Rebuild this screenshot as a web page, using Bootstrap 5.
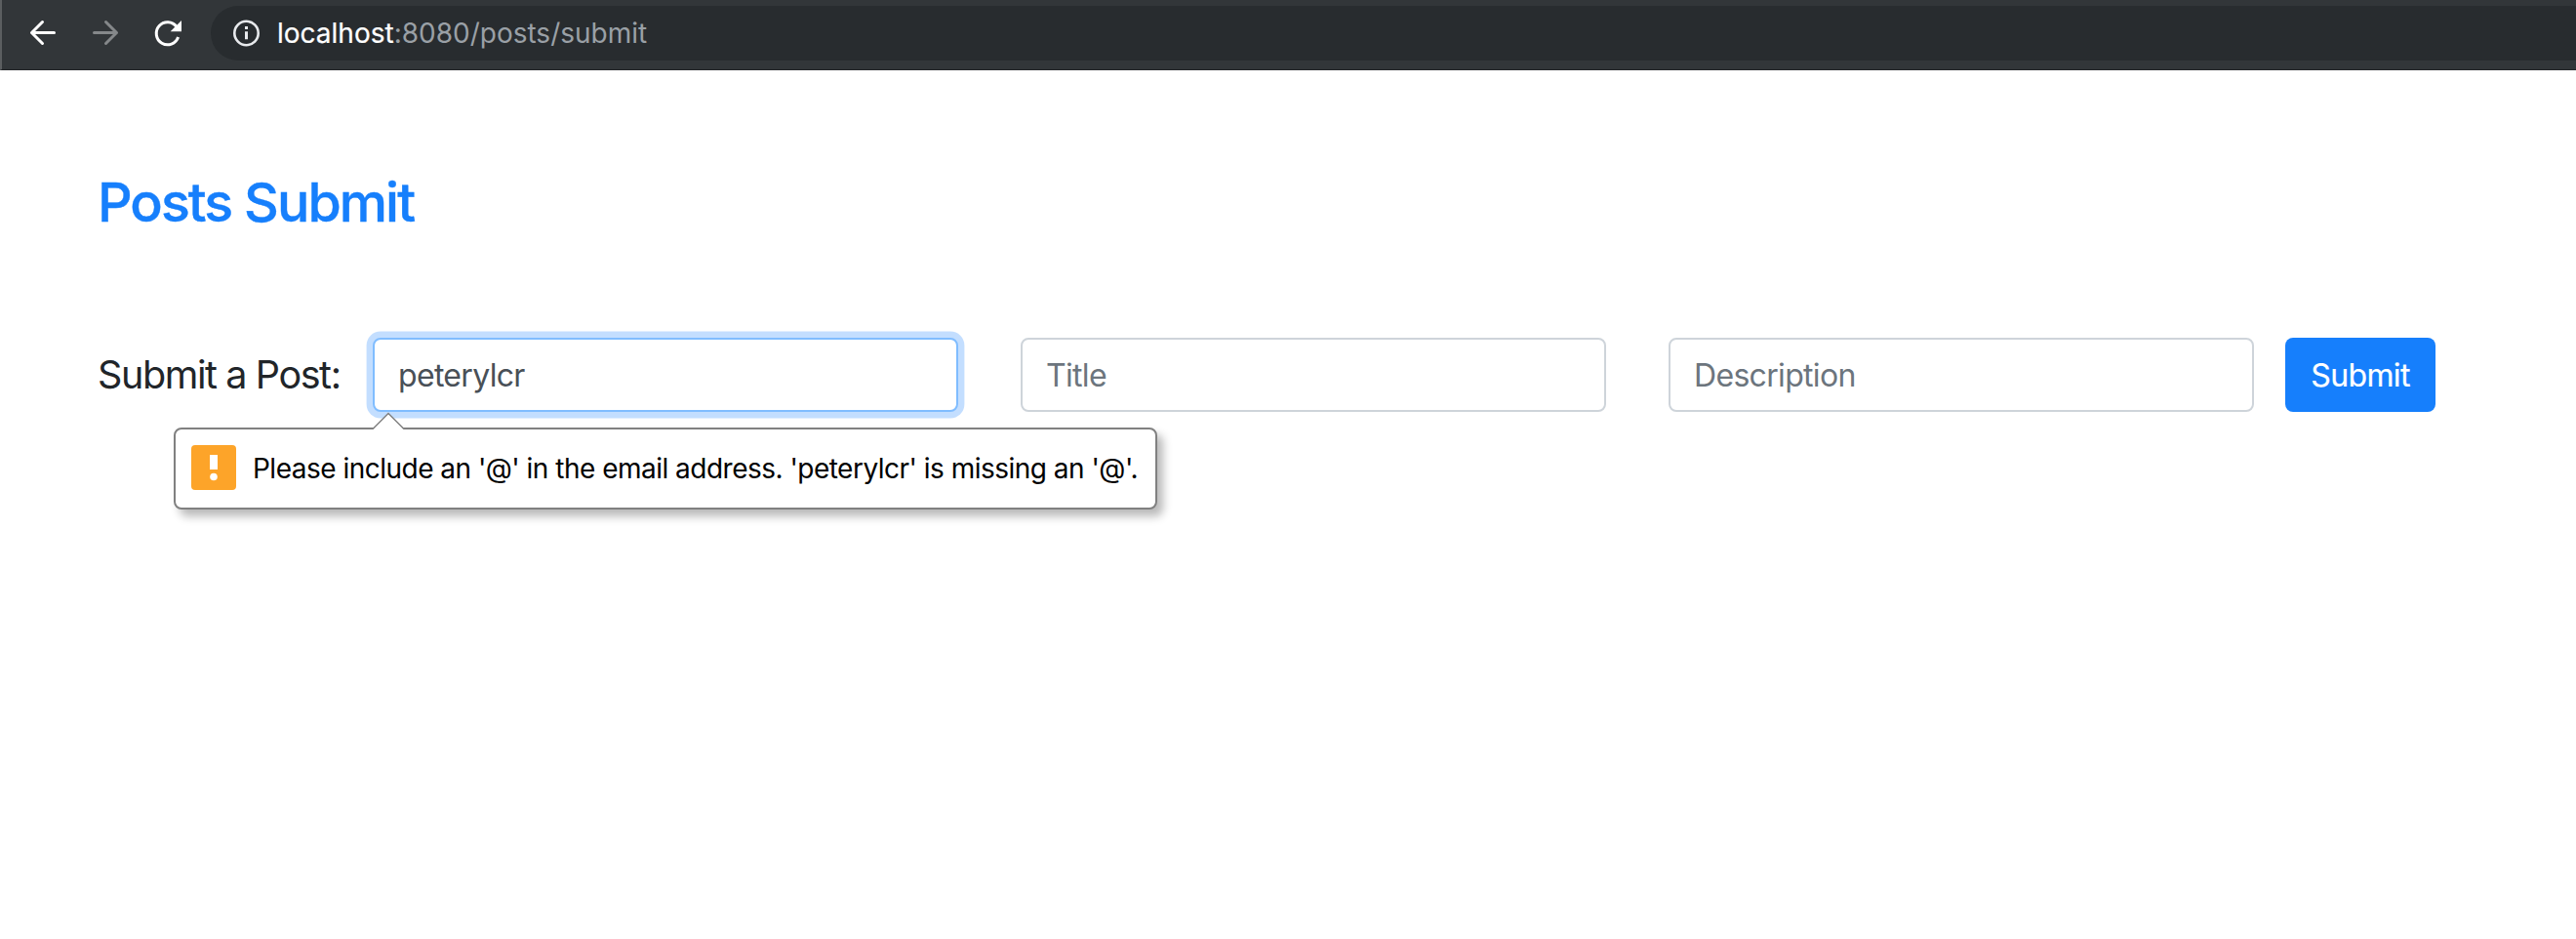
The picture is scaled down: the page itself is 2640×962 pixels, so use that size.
<!DOCTYPE html>
<html lang="en">
<head>
<meta charset="utf-8">
<title>Posts Submit</title>
<link href="https://cdn.jsdelivr.net/npm/bootstrap@5.3.0/dist/css/bootstrap.min.css" rel="stylesheet">
<style>
body { font-family: Inter, "Liberation Sans", sans-serif; background: #fff; color: #212529; overflow: hidden; height: 962px; }
.toolbar { height: 72px; background: #323639; border-left: 2px solid #5b5e60; border-bottom: 1px solid #242629; padding-top: 6px; }
.nav-icons { width: 214px; flex: none; height: 56px; }
.omnibox { height: 56px; background: #282c2f; border-radius: 28px 0 0 28px; padding-left: 21px; }
.url { font-size: 28px; line-height: 56px; color: #9aa0a6; white-space: pre; margin-left: 16px; }
.url b { color: #fff; font-weight: 400; -webkit-text-stroke: .2px currentColor; }
.page { padding: 101px 100px 0; }
.page h1 { font-size: 55.500px; line-height: 68px; font-weight: 500; letter-spacing: -1.95px; -webkit-text-stroke: .4px currentColor; color: #167ffc; margin: 0 0 105px; }
.post-label { font-size: 39.500px; line-height: 76px; letter-spacing: -1.4px; width: 282px; flex: none; }
.field-row { gap: 64px; }
.page .form-control { width: 600px; height: 76px; flex: none; border: 2px solid #ced4da; border-radius: 8px; padding: 0 24px; font-size: 32px; letter-spacing: -.68px; color: #495057; background: #fff; }
.page .form-control::placeholder { color: #6c757d; opacity: 1; }
.page .form-control.active-field { border-color: #80bdff; box-shadow: 0 0 0 6.4px #c3deff; }
.page .btn { width: 154px; height: 76px; border: 0; border-radius: 8px; background: #167ffc; font-size: 32px; letter-spacing: -.65px; -webkit-text-stroke: .2px currentColor; padding: 1px 0 0; margin-left: -32px; }
.bubble { left: -204px; top: 92px; width: 1008px; height: 84px; border: 2px solid #808080; border-radius: 8px; background: #fff; color: #000; padding: 0 0 2px 16px; box-shadow: 6px 7px 10px rgba(0,0,0,.28); font-size: 28px; letter-spacing: -.51px; white-space: nowrap; z-index: 2; }
.bubble svg { flex: none; }
.bubble .pointer { left: 202px; top: -18px; }
.bubble .msg { margin-left: 17px; padding-top: 2px; }
</style>
</head>
<body>
<header class="toolbar d-flex">
  <svg class="nav-icons" viewBox="2 6 214 56" fill="none" stroke-width="3" stroke-linecap="round" stroke-linejoin="round">
    <path d="M55.500 33.500H32.500M43.500 22.500L32.500 33.500L43.500 44.500" stroke="#fff"/>
    <path d="M96.500 33.500H119.500M108.500 22.500L119.500 33.500L108.500 44.500" stroke="#85888a"/>
    <path d="M181 27.500A11.500 11.500 0 1 0 182.600 38" stroke="#fff" stroke-linecap="butt"/>
    <path d="M186 21V32.300H174.700Z" fill="#fff"/>
  </svg>
  <div class="omnibox flex-grow-1 d-flex align-items-center">
    <svg width="31" height="30" viewBox="0 0 31 30"><circle cx="15.500" cy="15" r="12.200" fill="none" stroke="#e8eaed" stroke-width="2.600"/><path d="M14 8h3v3h-3zM14 13.300h3v8h-3z" fill="#e8eaed"/></svg>
    <span class="url"><b>localhost</b>:8080/posts/submit</span>
  </div>
</header>
<main class="page">
  <h1>Posts Submit</h1>
  <form class="d-flex align-items-center" novalidate>
    <label class="post-label" for="email">Submit a Post:</label>
    <div class="d-flex field-row">
      <div class="position-relative">
        <input id="email" class="form-control active-field" type="text" value="peterylcr">
        <div class="bubble position-absolute d-flex align-items-center" role="alert">
          <svg class="pointer position-absolute" width="32" height="20" viewBox="0 0 32 20"><path d="M0 18L16 2L32 18V20H0Z" fill="#fff"/><path d="M0 17.500L16 1.500L32 17.500" fill="none" stroke="#808080" stroke-width="1.500"/></svg>
          <svg width="46" height="46" viewBox="0 0 46 46"><rect width="46" height="46" rx="4" fill="#fda429"/><path d="M19 10h8v15h-8z" fill="#fff"/><circle cx="23" cy="32.500" r="3.800" fill="#fff"/></svg>
          <span class="msg">Please include an '@' in the email address. 'peterylcr' is missing an '@'.</span>
        </div>
      </div>
      <input class="form-control" type="text" placeholder="Title" aria-label="Title">
      <input class="form-control" type="text" placeholder="Description" aria-label="Description">
      <button class="btn btn-primary" type="button">Submit</button>
    </div>
  </form>
</main>
<script src="https://cdn.jsdelivr.net/npm/bootstrap@5.3.0/dist/js/bootstrap.bundle.min.js"></script>
</body>
</html>
